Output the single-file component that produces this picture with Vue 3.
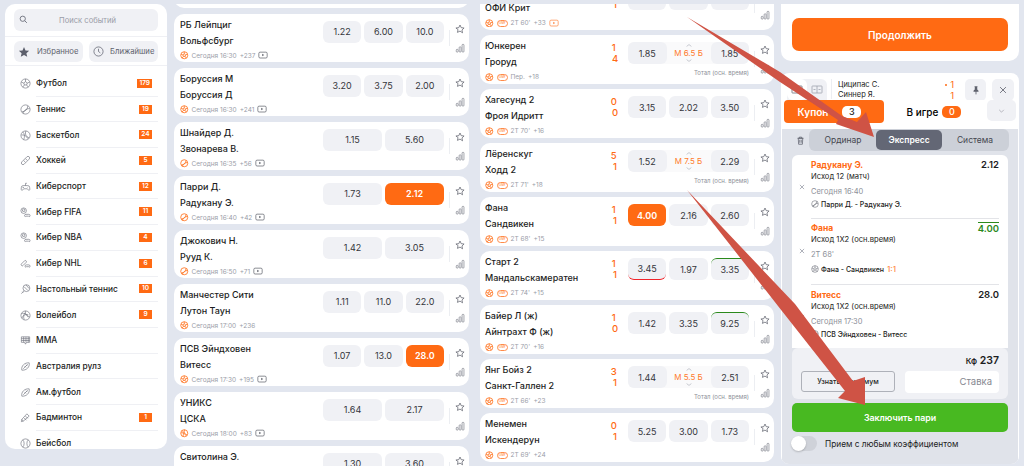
<script setup>
const circle = (cx, cy, r) => `M${cx - r} ${cy}a${r} ${r} 0 1 0 ${2 * r} 0a${r} ${r} 0 1 0 ${-2 * r} 0`

const icons = {
  ball: [circle(12, 12, 10), 'M12 8l3.8 2.8-1.4 4.4H9.6l-1.4-4.4Z', 'M12 2v6M21 9l-5 2M18 20l-3.6-4.8M6 20l3.6-4.8M3 9l5 2'],
  tennis: [circle(12, 12, 10), 'M4 17c7 0 13-5 13-13', 'M7 21c0-6 6-11 14-11'],
  basket: [circle(12, 12, 10), 'M6 4c4 4 5 11 2 17M13 2c-3 6 0 13 7 15M3 11c5-1 11 1 14 8'],
  hockey: ['M4 15L15 4a3.5 3.5 0 0 1 5 5L9 20a3.5 3.5 0 0 1-5-5Z', 'M8 12l4 4M12 8l4 4'],
  pad: ['M7 10h10a4 4 0 0 1 4 4l.5 4a2 2 0 0 1-3.6 1.4L16 17H8l-1.900 2.400A2 2 0 0 1 2.500 18L3 14a4 4 0 0 1 4-4Z', 'M12 10V5h3M7 13v2M6 14h2M16 14h1'],
  cyber: [circle(8, 8, 6), 'M8 4l3 2.200-1 3.300H6l-1-3.300Z', 'M13 16h6a3 3 0 0 1 3 3 1.600 1.600 0 0 1-3 1h-6a1.600 1.600 0 0 1-3-1 3 3 0 0 1 3-3Z'],
  cyberNhl: ['M3 13L10 6a2.500 2.500 0 0 1 3.500 3.500L7 16a2.500 2.500 0 0 1-4-3Z', 'M14 15h5a3 3 0 0 1 3 3 1.600 1.600 0 0 1-3 1h-5a1.600 1.600 0 0 1-3-1 3 3 0 0 1 3-3Z'],
  table: [circle(14, 9, 7.500), 'M9 14.500L3 21M5 17l2 2', 'M9 6l8 8M13 2l7 8'],
  volley: [circle(12, 12, 10), 'M12 2c-1 6 1 10 9 13M3 8c6-2 11 0 15 8M4 18c2-6 6-9 14-8M9 21c-2-6-1-11 2-15'],
  mma: ['M3 4h18v12h-7l-2 4-2-4H3Z', 'M3 8h18M3 12h18M8 4v12M13 4v12M18 4v12'],
  rugby: ['M4 20c-2-9 6-17 16-16 2 9-6 17-16 16Z', 'M7 17L17 7M10 11l3 3M13 8l3 3'],
  shuttle: ['M3 21l4-1 13-11-5-5L4 16Z', 'M7 20l-3-4M9 13l5 5M12 9l5 5'],
  baseball: [circle(12, 12, 10), 'M6 4c4 4 4 12 0 16M18 4c-4 4-4 12 0 16'],
}

const sports = [
  { name: 'Футбол', icon: 'ball', count: 179 },
  { name: 'Теннис', icon: 'tennis', count: 19 },
  { name: 'Баскетбол', icon: 'basket', count: 24 },
  { name: 'Хоккей', icon: 'hockey', count: 5 },
  { name: 'Киберспорт', icon: 'pad', count: 12 },
  { name: 'Кибер FIFA', icon: 'cyber', count: 11 },
  { name: 'Кибер NBA', icon: 'cyber', count: 4 },
  { name: 'Кибер NHL', icon: 'cyberNhl', count: 6 },
  { name: 'Настольный теннис', icon: 'table', count: 10 },
  { name: 'Волейбол', icon: 'volley', count: 9 },
  { name: 'ММА', icon: 'mma' },
  { name: 'Австралия рулз', icon: 'rugby' },
  { name: 'Ам.футбол', icon: 'rugby' },
  { name: 'Бадминтон', icon: 'shuttle', count: 1 },
  { name: 'Бейсбол', icon: 'baseball' },
]

const today = [
  { teams: ['', ''], odds: [], time: '' },
  { teams: ['РБ Лейпциг', 'Вольфсбург'], odds: ['1.22', '6.00', '10.0'], time: 'Сегодня 16:30', more: '+237', tv: true, icon: 'ball' },
  { teams: ['Боруссия М', 'Боруссия Д'], odds: ['3.20', '3.75', '2.00'], time: 'Сегодня 16:30', more: '+241', tv: true, icon: 'ball' },
  { teams: ['Шнайдер Д.', 'Звонарева В.'], odds: ['1.15', '5.60'], time: 'Сегодня 16:35', more: '+56', tv: true, icon: 'tennis' },
  { teams: ['Парри Д.', 'Радукану Э.'], odds: ['1.73', '2.12'], active: 1, time: 'Сегодня 16:40', more: '+42', tv: true, icon: 'tennis' },
  { teams: ['Джокович Н.', 'Рууд К.'], odds: ['1.42', '3.05'], time: 'Сегодня 16:50', more: '+71', tv: true, icon: 'tennis' },
  { teams: ['Манчестер Сити', 'Лутон Таун'], odds: ['1.11', '11.0', '22.0'], time: 'Сегодня 17:00', more: '+236', icon: 'ball' },
  { teams: ['ПСВ Эйндховен', 'Витесс'], odds: ['1.07', '13.0', '28.0'], active: 2, time: 'Сегодня 17:30', more: '+195', tv: true, icon: 'ball' },
  { teams: ['УНИКС', 'ЦСКА'], odds: ['1.64', '2.17'], time: 'Сегодня 18:00', more: '+83', tv: true, icon: 'basket' },
  { teams: ['Свитолина Э.', ''], odds: ['1.30', '3.60'], time: '' },
]

const live = [
  { teams: ['', 'ОФИ Крит'], score: ['', 1], odds: ['', '', ''], time: '2Т 60\'', more: '+33', tv: true, icon: 'ball', live: true },
  { teams: ['Юнкерен', 'Гроруд'], score: [1, 4], odds: ['1.85', '1.85'], total: 'М 6.5 Б', time: 'Пер.', more: '+18', icon: 'ball', live: true },
  { teams: ['Хагесунд 2', 'Фроя Идритт'], score: [0, 0], odds: ['3.15', '2.02', '3.50'], time: '2Т 70\'', more: '+16', icon: 'ball', live: true },
  { teams: ['Лёренскуг', 'Ходд 2'], score: [5, 1], odds: ['1.52', '2.29'], total: 'М 7.5 Б', time: '2Т 71\'', more: '+18', icon: 'ball', live: true },
  { teams: ['Фана', 'Сандвикен'], score: [1, 1], odds: ['4.00', '2.16', '2.60'], active: 0, time: '2Т 68\'', more: '+15', icon: 'ball', live: true },
  { teams: ['Старт 2', 'Мандальскамератен'], score: [1, 1], odds: ['3.45', '1.97', '3.35'], down: 0, up: 2, time: '2Т 74\'', more: '+15', icon: 'ball', live: true },
  { teams: ['Байер Л (ж)', 'Айнтрахт Ф (ж)'], score: [1, 0], odds: ['1.42', '3.35', '9.25'], up: 2, time: '2Т 70\'', more: '+16', icon: 'ball', live: true },
  { teams: ['Янг Бойз 2', 'Санкт-Галлен 2'], score: [3, 1], odds: ['1.44', '2.51'], total: 'М 5.5 Б', time: '2Т 66\'', more: '+23', icon: 'ball', live: true },
  { teams: ['Менемен', 'Искендерун'], score: [0, 1], odds: ['5.25', '3.00', '1.73'], time: '2Т 69\'', more: '+24', icon: 'ball', live: true },
]

const columns = [
  { key: 'today', items: today },
  { key: 'live', items: live },
]

const bets = [
  { title: 'Радукану Э.', odd: '2.12', outcome: 'Исход 12 (матч)', time: 'Сегодня 16:40', event: 'Парри Д. - Радукану Э.', icon: 'tennis' },
  { title: 'Фана', odd: '4.00', up: true, outcome: 'Исход 1X2 (осн.время)', time: '2Т 68\'', event: 'Фана - Сандвикен', score: '1:1', icon: 'ball' },
  { title: 'Витесс', odd: '28.0', outcome: 'Исход 1X2 (осн.время)', time: 'Сегодня 17:30', event: 'ПСВ Эйндховен - Витесс', icon: 'ball' },
]
</script>

<template>
  <div class="page">
    <aside class="sidebar">
      <div class="search">
        <svg class="search__icon" viewBox="0 0 24 24"><path :d="circle(10, 10, 7)" /><path d="M15 15l6 6" /></svg>
        <span>Поиск событий</span>
      </div>
      <div class="quick">
        <button class="quick__btn">
          <svg class="quick__star" viewBox="0 0 24 24"><path d="M12 2l3 6.800 7.300.700-5.500 4.900 1.600 7.200L12 17.900l-6.400 3.700 1.600-7.200L1.700 9.500 9 8.800Z" /></svg>
          Избранное
        </button>
        <button class="quick__btn">
          <svg class="quick__clock" viewBox="0 0 24 24"><path :d="circle(12, 12, 10)" /><path d="M12 6v6l4 3" /></svg>
          Ближайшие
        </button>
      </div>
      <ul class="sports">
        <li v-for="sport in sports" :key="sport.name" class="sport">
          <svg class="sport__icon" viewBox="0 0 24 24"><path v-for="d in icons[sport.icon]" :key="d" :d="d" /></svg>
          <div class="sport__body">
            <span>{{ sport.name }}</span>
            <b v-if="sport.count" class="sport__count">{{ sport.count }}</b>
          </div>
        </li>
      </ul>
    </aside>

    <section v-for="col in columns" :key="col.key" class="events" :class="'events--' + col.key">
      <article v-for="(item, i) in col.items" :key="i" class="card">
        <div class="card__info">
          <div class="card__team">{{ item.teams[0] }}</div>
          <div class="card__team">{{ item.teams[1] }}</div>
          <div v-if="item.time" class="meta">
            <svg class="meta__sport" viewBox="0 0 24 24"><path v-for="d in icons[item.icon]" :key="d" :d="d" /></svg>
            <span v-if="item.live" class="meta__live">LIVE</span>
            <span>{{ item.time }}</span>
            <span>{{ item.more }}</span>
            <svg v-if="item.tv" class="meta__tv" :class="{ 'meta__tv--live': item.live }" viewBox="0 0 24 20">
              <rect x="2" y="2" width="20" height="14" rx="3" /><path class="meta__play" d="M10 6l5 3-5 3Z" />
            </svg>
          </div>
        </div>
        <div v-if="item.score" class="card__score">
          <span>{{ item.score[0] }}&nbsp;</span>
          <span>{{ item.score[1] }}</span>
        </div>
        <div class="market">
          <div class="odds" :class="{ 'odds--total': item.total }">
            <template v-for="(odd, n) in item.odds" :key="n">
              <div v-if="item.total && n === 1" class="odds__total">
                <svg class="odds__chev odds__chev--up" viewBox="0 0 10 5"><path d="M1 4l4-3 4 3" /></svg>
                {{ item.total }}
                <svg class="odds__chev odds__chev--down" viewBox="0 0 10 5"><path d="M1 1l4 3 4-3" /></svg>
              </div>
              <button
                class="odd"
                :class="{ 'odd--active': item.active === n, 'odd--up': item.up === n, 'odd--down': item.down === n }"
              >{{ odd }}</button>
            </template>
          </div>
          <div v-if="item.total" class="market__label">Тотал (осн. время)</div>
        </div>
        <div v-if="item.odds.length" class="side">
          <svg class="side__star" viewBox="0 0 24 24"><path d="M12 2.500l2.900 6.300 6.900.800-5.100 4.700 1.400 6.800L12 17l-6.100 3.100 1.400-6.800L2.200 9.600l6.900-.800Z" /></svg>
          <svg class="side__bars" viewBox="0 0 24 24"><rect x="3" y="15" width="4.500" height="7" rx="2.200" /><rect x="10" y="9" width="4.500" height="13" rx="2.200" /><rect x="17" y="3" width="4.500" height="19" rx="2.200" /></svg>
        </div>
      </article>
    </section>

    <div class="right">
      <div class="proceed"><button class="proceed__btn">Продолжить</button></div>
      <div class="slip">
        <div class="slip__top">
          <div class="media">
            <span class="media__cell media__cell--on"><svg viewBox="0 0 24 18"><rect x="2" y="2" width="20" height="14" rx="1" /></svg></span>
            <span class="media__cell"><svg viewBox="0 0 24 18"><rect x="2" y="2" width="20" height="14" rx="1" /><path d="M12 2v14M5 9h4M15 9h4" /></svg></span>
          </div>
          <div class="match">
            <div>Циципас С.</div>
            <div>Синнер Я.</div>
          </div>
          <div class="match__score">
            <div><i></i>1</div>
            <div>1</div>
          </div>
          <button class="tool">
            <svg viewBox="0 0 24 24"><path class="tool__fill" d="M8 3h8l-1 2v6l3 3v2H13v6l-1 1-1-1v-6H6v-2l3-3V5Z" /></svg>
          </button>
          <button class="tool">
            <svg viewBox="0 0 24 24"><path d="M5 5l14 14M19 5L5 19" /></svg>
          </button>
        </div>
        <div class="tabs">
          <button class="tab tab--active">Купон <b class="tab__count">3</b></button>
          <button class="tab">В игре <b class="tab__count tab__count--orange">0</b></button>
          <button class="tabs__more"><svg viewBox="0 0 12 6"><path d="M2 1l4 4 4-4" /></svg></button>
        </div>
        <div class="coupon">
          <div class="mode">
            <svg class="mode__trash" viewBox="0 0 24 24"><path d="M4 6h16M9 6V3h6v3M6 6l1 16h10l1-16Z" /><path d="M10 10v8M14 10v8" /></svg>
            <div class="mode__seg">
              <span class="mode__item">Ординар</span>
              <span class="mode__item mode__item--active">Экспресс</span>
              <span class="mode__item">Система</span>
            </div>
          </div>
          <div class="bets">
            <div v-for="bet in bets" :key="bet.title" class="bet" :class="{ 'bet--live': bet.score }">
              <svg class="bet__remove" viewBox="0 0 10 10"><path d="M1.500 1.500l7 7M8.500 1.500l-7 7" /></svg>
              <div class="bet__head">
                <b class="bet__title">{{ bet.title }}</b>
                <b class="bet__odd" :class="{ 'bet__odd--up': bet.up }">{{ bet.odd }}</b>
              </div>
              <div class="bet__line">{{ bet.outcome }}</div>
              <div class="bet__time">{{ bet.time }}</div>
              <div class="bet__event">
                <svg viewBox="0 0 24 24"><path v-for="d in icons[bet.icon]" :key="d" :d="d" /></svg>
                {{ bet.event }}
                <span v-if="bet.score" class="bet__score">{{ bet.score }}</span>
              </div>
            </div>
          </div>
          <div class="summary">
            <div class="summary__rate"><small>Кф</small> 237</div>
            <div class="summary__row">
              <button class="summary__max">Узнать максимум</button>
              <div class="summary__stake">Ставка</div>
            </div>
          </div>
          <button class="place">Заключить пари</button>
          <div class="accept">
            <span class="toggle"><i></i></span>
            Прием с любым коэффициентом
          </div>
        </div>
      </div>
    </div>

    <svg class="arrows" viewBox="0 0 1024 466">
      <path d="M687 17L780 72 842 116 857 122 866 112 874 137 836 124 838 120 780 82Z" />
      <path d="M687 190L795 304 853 381 865 377 865 405 838 398 845 391 778 306Z" />
    </svg>
  </div>
</template>

<style>
html,
body {
  margin: 0;
  background: #e2e6ef;
}
</style>

<style scoped>
* {
  box-sizing: border-box;
}

button {
  border: none;
  padding: 0;
  font: inherit;
}

svg {
  display: block;
  flex: none;
  fill: none;
  stroke: currentColor;
}

.page {
  position: relative;
  display: flex;
  align-items: flex-start;
  width: 1024px;
  height: 466px;
  overflow: hidden;
  padding: 4px 0 0 5px;
  background: #e2e6ef;
  font-family: Inter, "Liberation Sans", sans-serif;
  color: #1c1d22;
}

.sidebar {
  flex: none;
  width: 162px;
  height: 445px;
  overflow: hidden;
  border-radius: 10px;
  background: #fff;
}

.search {
  position: relative;
  display: flex;
  align-items: center;
  justify-content: center;
  height: 22px;
  margin: 5px 9px 0;
  padding-left: 3px;
  border-radius: 6px;
  background: #f0f1f5;
  font-size: 7.600px;
  color: #9a9da8;
}

.search__icon {
  position: absolute;
  left: 5px;
  top: 6px;
  width: 9px;
  height: 9px;
  stroke-width: 2.500;
  color: #70737f;
}

.quick {
  display: flex;
  gap: 6px;
  margin-top: 5px;
  padding: 4px 9px 3px;
  border-top: 1px solid #eff0f4;
  border-bottom: 1px solid #eff0f4;
}

.quick__btn {
  display: flex;
  flex: 1;
  align-items: center;
  gap: 7px;
  height: 21px;
  padding-left: 4px;
  border-radius: 6px;
  background: #f0f1f5;
  font-size: 7.700px;
  white-space: nowrap;
  color: #5f626d;
}

.quick__star {
  width: 12px;
  height: 12px;
  fill: #5c5f6c;
  stroke: none;
}

.quick__clock {
  width: 11px;
  height: 11px;
  margin-right: -1px;
  stroke-width: 1.600;
  color: #5c5f6c;
}

.sports {
  margin: 5px 0 0;
  padding: 0;
  list-style: none;
}

.sport {
  display: flex;
  align-items: center;
  height: 25.700px;
  padding: 0 9px 0 15px;
}

.sport__icon {
  width: 11px;
  height: 11px;
  margin-right: 5px;
  stroke-width: 1.400;
  color: #6d707b;
}

.sport__body {
  display: flex;
  flex: 1;
  align-items: center;
  justify-content: space-between;
  height: 100%;
  padding-right: 6px;
  border-bottom: 1px solid #eff0f4;
  font-size: 8.400px;
  font-weight: 500;
}

.sport__count {
  min-width: 13px;
  height: 9px;
  padding: 0 2px;
  background: #ff6a13;
  font-size: 6.500px;
  font-weight: 600;
  line-height: 9px;
  text-align: center;
  color: #fff;
}

.events {
  display: flex;
  flex: none;
  flex-direction: column;
  gap: 5.500px;
  width: 295px;
  height: 462px;
  overflow: hidden;
}

.events--today {
  margin-left: 7px;
}

.events--live {
  width: 294px;
  margin-left: 11px;
}

.card {
  display: flex;
  flex: none;
  height: 48.500px;
  padding: 0 0 0 6px;
  border-radius: 10px;
  background: #fff;
}

.events--live .card {
  padding-left: 5px;
}

.events--today .card:first-child {
  margin-top: -44.500px;
}

.events--live .card:first-child {
  margin-top: -23px;
}

.card__info {
  flex: 1;
  min-width: 0;
  padding-top: 4px;
}

.card__team {
  height: 16px;
  font-size: 9px;
  font-weight: 500;
  line-height: 14px;
}

.card__score {
  display: flex;
  flex-direction: column;
  width: 12px;
  margin-right: 7px;
  padding-top: 8px;
  font-size: 9.500px;
  font-weight: 500;
  line-height: 10.500px;
  text-align: center;
  color: #ff6a13;
}

.meta {
  display: flex;
  align-items: center;
  gap: 3px;
  height: 10px;
  margin-top: 1px;
  font-size: 6.500px;
  color: #9a9da8;
}

.meta__sport {
  width: 8.500px;
  height: 8.500px;
  stroke-width: 2.500;
  color: #ff7a2b;
}

.meta__live {
  width: 11px;
  height: 7px;
  border: 1px solid #ff8c4a;
  border-radius: 3.500px;
  font-size: 3px;
  font-weight: 700;
  line-height: 5px;
  text-align: center;
  color: #ff8c4a;
}

.meta__tv {
  width: 10px;
  height: 9px;
  stroke-width: 1.800;
  color: #63666f;
}

.meta__tv--live {
  color: #ff8c4a;
}

.meta__play {
  fill: currentColor;
  stroke: none;
}

.market {
  flex: none;
  width: 121px;
  padding-top: 7px;
}

.odds {
  display: flex;
  gap: 3px;
  height: 22px;
}

.odds--total {
  gap: 0;
  border-radius: 6px;
  background: #fafafb;
}

.odds__total {
  position: relative;
  flex: none;
  width: 44px;
  font-size: 8px;
  line-height: 22px;
  text-align: center;
  color: #ff7a2b;
}

.odds__chev {
  position: absolute;
  left: 19px;
  width: 6px;
  height: 3px;
  stroke-width: 1;
  color: #a6a9b3;
}

.odds__chev--up {
  top: 2px;
}

.odds__chev--down {
  bottom: 2px;
}

.odd {
  flex: 1;
  border-radius: 6px;
  background: #f0f1f5;
  font-size: 9px;
  color: #34353b;
}

.odd--active {
  background: #ff6a13;
  font-weight: 600;
  color: #fff;
}

.odd--up {
  border-top: 1px solid #2b8a1c;
}

.odd--down {
  border-bottom: 1px solid #f0242a;
}

.market__label {
  margin-top: 4px;
  font-size: 6px;
  line-height: 9px;
  text-align: right;
  color: #8d9099;
}

.side {
  position: relative;
  display: flex;
  flex: none;
  flex-direction: column;
  align-items: center;
  width: 25px;
  padding: 10px 0 0 7px;
  color: #5f626d;
}

.side::before {
  content: '';
  position: absolute;
  left: 5px;
  top: 16px;
  width: 1px;
  height: 16px;
  background: #eceef2;
}

.side__star {
  width: 10px;
  height: 10px;
  stroke-width: 1.800;
}

.side__bars {
  width: 10px;
  height: 10px;
  margin-top: 9px;
  stroke-width: 1.600;
  color: #777a85;
}

.right {
  flex: none;
  width: 238px;
  margin-left: 7px;
}

.proceed {
  display: flex;
  height: 57px;
  padding: 14px 11px 10px;
  border-radius: 0 0 10px 10px;
  background: #fff;
}

.proceed__btn {
  flex: 1;
  border-radius: 7px;
  background: #ff6a13;
  font-size: 10px;
  font-weight: 600;
  color: #fff;
}

.slip {
  margin-top: 12px;
  height: 391px;
  overflow: hidden;
  border-radius: 8px;
  background: #fff;
}

.slip__top {
  display: flex;
  align-items: flex-start;
  height: 27px;
  padding: 6px 5px 0 6px;
  overflow: hidden;
}

.media {
  display: flex;
  width: 40px;
  height: 21px;
  border-radius: 6px 6px 0 0;
  background: #f0f1f5;
}

.media__cell {
  display: flex;
  flex: 1;
  align-items: center;
  justify-content: center;
  border-radius: 6px;
  color: #9a9da8;
}

.media__cell--on {
  background: #fff;
  color: #5f626d;
}

.media__cell svg {
  width: 12px;
  height: 9px;
  stroke-width: 1.500;
}

.match {
  width: 109px;
  height: 20px;
  margin-left: 4px;
  padding: 1px 0 0 6px;
  border-left: 1px solid #eceef2;
  font-size: 7.500px;
  line-height: 10px;
}

.match__score {
  width: 14px;
  margin-right: 11px;
  font-size: 9.500px;
  line-height: 11px;
  text-align: right;
  color: #ff6a13;
}

.match__score i {
  display: inline-block;
  width: 2px;
  height: 2px;
  margin: 0 3px 2px 0;
  border-radius: 50%;
  background: #ff6a13;
}

.tool {
  display: flex;
  align-items: center;
  justify-content: center;
  width: 21px;
  height: 22px;
  margin-right: 6px;
  border-radius: 5px;
  background: #f0f1f5;
  color: #5f626d;
}

.tool:last-child {
  width: 22px;
  margin-right: 0;
}

.tool svg {
  width: 10px;
  height: 10px;
  stroke-width: 2;
}

.tool__fill {
  fill: currentColor;
  stroke: none;
}

.tabs {
  display: flex;
  align-items: flex-start;
  height: 23px;
  padding: 0 3px;
  background: #fff;
}

.tab {
  display: flex;
  align-items: center;
  justify-content: center;
  gap: 4px;
  width: 100px;
  height: 23px;
  border-radius: 4px;
  background: transparent;
  font-size: 10px;
  font-weight: 500;
}

.tab--active {
  gap: 14px;
  padding-right: 9px;
  background: #ff6a13;
  font-weight: 600;
  color: #fff;
}

.tab__count {
  width: 19px;
  height: 12px;
  border-radius: 5px;
  background: #fff;
  font-size: 9px;
  font-weight: 500;
  line-height: 12px;
  color: #1c1d22;
}

.tab__count--orange {
  background: #ff6a13;
  color: #fff;
}

.tabs__more {
  display: flex;
  align-items: center;
  justify-content: center;
  width: 29px;
  height: 21px;
  margin-left: 3px;
  border-radius: 5px;
  background: #f0f1f5;
  color: #8d9099;
}

.tabs__more svg {
  width: 7px;
  height: 4px;
}

.coupon {
  height: 341px;
  border: 1px solid #fff;
  border-top: none;
  border-radius: 0 0 6px 6px;
  background: #e0e3ea;
}

.mode {
  display: flex;
  align-items: center;
  height: 22px;
  margin: 6px 9px 0 14px;
}

.mode__trash {
  width: 9px;
  height: 11px;
  margin-right: 4px;
  stroke-width: 2;
  color: #5f626d;
}

.mode__seg {
  display: flex;
  flex: 1;
  align-items: center;
  height: 22px;
  padding: 1px;
  border-radius: 6px;
  background: #ccd0d8;
}

.mode__item {
  flex: 1;
  font-size: 8.500px;
  line-height: 20px;
  text-align: center;
  color: #44464f;
}

.mode__item--active {
  border-radius: 5px;
  background: #636775;
  font-weight: 600;
  color: #fff;
}

.bets {
  display: flex;
  flex-direction: column;
  height: 193px;
  margin: 4px 10px 0;
  padding: 0 9px 0 19px;
  border-radius: 6px 6px 0 0;
  background: #fff;
}

.bet {
  position: relative;
  padding: 4px 0 8px;
  border-bottom: 1px solid #e3e4e8;
}

.bet:last-child {
  border-bottom: none;
}

.bet--live {
  padding: 3px 0 9px;
}

.bet--live .bet__event {
  margin-top: 2px;
}

.bet__remove {
  position: absolute;
  left: -12px;
  top: 29px;
  width: 6px;
  height: 6px;
  stroke-width: 1.500;
  color: #a6a9b3;
}

.bet__head {
  display: flex;
  justify-content: space-between;
  height: 12px;
  line-height: 12px;
}

.bet__title {
  font-size: 8.500px;
  font-weight: 700;
  color: #ff6a13;
}

.bet__odd {
  font-size: 9.500px;
  font-weight: 600;
}

.bet__odd--up {
  border-top: 1px solid #2b8a1c;
  color: #2b8a1c;
}

.bet__line {
  height: 12px;
  font-size: 7.600px;
  line-height: 12px;
}

.bet__time {
  height: 12px;
  margin-top: 3px;
  font-size: 7.500px;
  line-height: 12px;
  color: #8d9099;
}

.bet__event {
  display: flex;
  align-items: center;
  gap: 2px;
  height: 12px;
  font-size: 7px;
  font-weight: 500;
}

.bet__event svg {
  width: 8px;
  height: 8px;
  stroke-width: 1.800;
  color: #6d707b;
}

.bet__score {
  margin-left: 1px;
  font-size: 8px;
  color: #ff8c4a;
}

.summary {
  height: 51px;
  margin: 0 10px;
  padding: 6px 9px 0;
  border-radius: 6px;
  background: #f0f1f5;
}

.summary__rate {
  height: 13px;
  font-size: 10.500px;
  font-weight: 600;
  line-height: 13px;
  text-align: right;
}

.summary__rate small {
  font-size: 8px;
}

.summary__row {
  display: flex;
  gap: 10px;
  margin-top: 4px;
}

.summary__max {
  width: 94px;
  height: 21px;
  border: 1px solid #aeb1b9;
  border-radius: 3px;
  background: transparent;
  font-size: 7px;
  font-weight: 500;
  color: #1c1d22;
}

.summary__stake {
  flex: 1;
  height: 22px;
  padding-right: 7px;
  border-radius: 4px;
  background: #fff;
  font-size: 9.500px;
  line-height: 22px;
  text-align: right;
  color: #85878f;
}

.place {
  display: block;
  width: 216px;
  height: 29px;
  margin: 4px 10px 0;
  border-radius: 5px;
  background: #48b921;
  font-size: 8.800px;
  font-weight: 600;
  color: #fff;
}

.accept {
  display: flex;
  align-items: center;
  gap: 8px;
  height: 15px;
  margin: 4px 9px 0;
  font-size: 8.300px;
}

.toggle {
  display: block;
  width: 26px;
  height: 15px;
  border-radius: 8px;
  background: #cfd2d9;
}

.toggle i {
  display: block;
  width: 15px;
  height: 15px;
  border-radius: 50%;
  background: #fff;
  box-shadow: 0 1px 2px rgba(0, 0, 0, 0.2);
}

.arrows {
  position: absolute;
  left: 0;
  top: 0;
  width: 1024px;
  height: 466px;
  fill: #cf5345;
  stroke: none;
  pointer-events: none;
}
</style>
